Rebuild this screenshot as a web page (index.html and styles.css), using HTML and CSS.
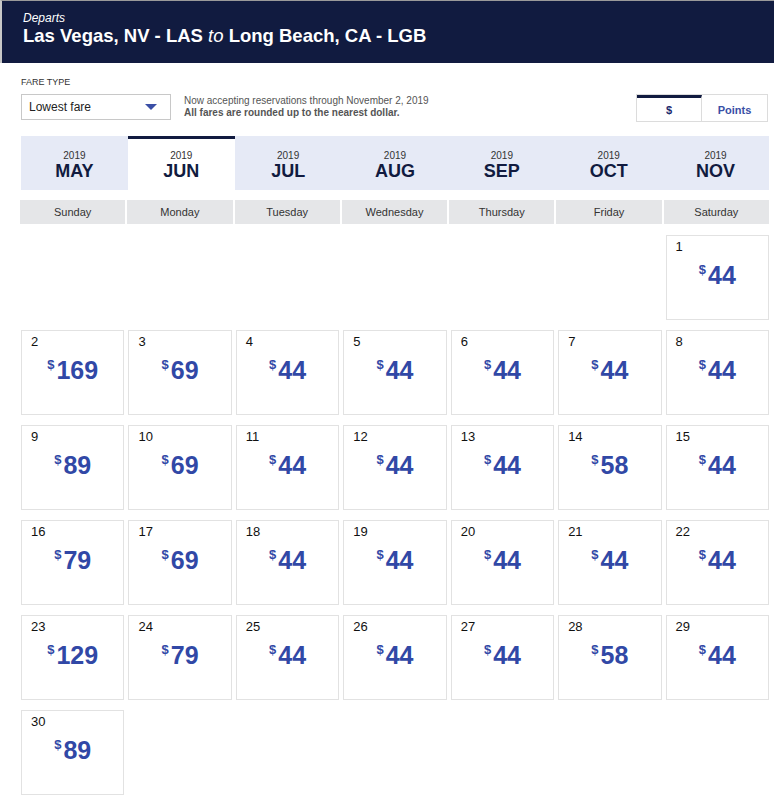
FILE: index.html
```html
<!DOCTYPE html>
<html>
<head>
    <title>Low Fare Calendar</title>
    <link rel="stylesheet" href="styles.css">
</head>
<body>
    <div class="header">
        <div class="departs">Departs</div>
        <h1 class="route">Las Vegas, NV - LAS <em>to</em> Long Beach, CA - LGB</h1>
    </div>

    <div class="page">
        <div class="fare-row">
            <div class="fare-type">
                <label class="fare-label">FARE TYPE</label>
                <div class="select">
                    <span>Lowest fare</span>
                    <svg width="12" height="6" viewBox="0 0 12 6"><path d="M0 0h12L6 6z" fill="#3a4fa6"/></svg>
                </div>
            </div>
            <div class="notice">
                <p>Now accepting reservations through November 2, 2019</p>
                <p class="strong">All fares are rounded up to the nearest dollar.</p>
            </div>
            <div class="toggle">
                <div class="toggle-btn active">$</div>
                <div class="toggle-btn">Points</div>
            </div>
        </div>

        <div class="months">
            <div class="month"><span class="year">2019</span><span class="name">MAY</span></div>
            <div class="month active"><span class="year">2019</span><span class="name">JUN</span></div>
            <div class="month"><span class="year">2019</span><span class="name">JUL</span></div>
            <div class="month"><span class="year">2019</span><span class="name">AUG</span></div>
            <div class="month"><span class="year">2019</span><span class="name">SEP</span></div>
            <div class="month"><span class="year">2019</span><span class="name">OCT</span></div>
            <div class="month"><span class="year">2019</span><span class="name">NOV</span></div>
        </div>

        <div class="weekdays">
            <div>Sunday</div>
            <div>Monday</div>
            <div>Tuesday</div>
            <div>Wednesday</div>
            <div>Thursday</div>
            <div>Friday</div>
            <div>Saturday</div>
        </div>

        <div class="calendar">
            <div class="day first"><div class="num">1</div><div class="price"><sup>$</sup>44</div></div>
            <div class="day"><div class="num">2</div><div class="price"><sup>$</sup>169</div></div>
            <div class="day"><div class="num">3</div><div class="price"><sup>$</sup>69</div></div>
            <div class="day"><div class="num">4</div><div class="price"><sup>$</sup>44</div></div>
            <div class="day"><div class="num">5</div><div class="price"><sup>$</sup>44</div></div>
            <div class="day"><div class="num">6</div><div class="price"><sup>$</sup>44</div></div>
            <div class="day"><div class="num">7</div><div class="price"><sup>$</sup>44</div></div>
            <div class="day"><div class="num">8</div><div class="price"><sup>$</sup>44</div></div>
            <div class="day"><div class="num">9</div><div class="price"><sup>$</sup>89</div></div>
            <div class="day"><div class="num">10</div><div class="price"><sup>$</sup>69</div></div>
            <div class="day"><div class="num">11</div><div class="price"><sup>$</sup>44</div></div>
            <div class="day"><div class="num">12</div><div class="price"><sup>$</sup>44</div></div>
            <div class="day"><div class="num">13</div><div class="price"><sup>$</sup>44</div></div>
            <div class="day"><div class="num">14</div><div class="price"><sup>$</sup>58</div></div>
            <div class="day"><div class="num">15</div><div class="price"><sup>$</sup>44</div></div>
            <div class="day"><div class="num">16</div><div class="price"><sup>$</sup>79</div></div>
            <div class="day"><div class="num">17</div><div class="price"><sup>$</sup>69</div></div>
            <div class="day"><div class="num">18</div><div class="price"><sup>$</sup>44</div></div>
            <div class="day"><div class="num">19</div><div class="price"><sup>$</sup>44</div></div>
            <div class="day"><div class="num">20</div><div class="price"><sup>$</sup>44</div></div>
            <div class="day"><div class="num">21</div><div class="price"><sup>$</sup>44</div></div>
            <div class="day"><div class="num">22</div><div class="price"><sup>$</sup>44</div></div>
            <div class="day"><div class="num">23</div><div class="price"><sup>$</sup>129</div></div>
            <div class="day"><div class="num">24</div><div class="price"><sup>$</sup>79</div></div>
            <div class="day"><div class="num">25</div><div class="price"><sup>$</sup>44</div></div>
            <div class="day"><div class="num">26</div><div class="price"><sup>$</sup>44</div></div>
            <div class="day"><div class="num">27</div><div class="price"><sup>$</sup>44</div></div>
            <div class="day"><div class="num">28</div><div class="price"><sup>$</sup>58</div></div>
            <div class="day"><div class="num">29</div><div class="price"><sup>$</sup>44</div></div>
            <div class="day"><div class="num">30</div><div class="price"><sup>$</sup>89</div></div>
        </div>
    </div>
</body>
</html>
```

FILE: styles.css
```css
body {
    font-family: "Liberation Sans", Arial, sans-serif;
    background-color: #fff;
    margin: 0;
    color: #111;
}

.header {
    background-color: #111b40;
    color: #fff;
    height: 63px;
    box-sizing: border-box;
    border-top: 1px solid #9a9a9a;
    border-left: 2px solid #c8c8c8;
    padding: 10px 0 0 21px;
}

.departs {
    font-size: 12px;
    font-style: italic;
    line-height: 14px;
}

.route {
    margin: 0;
    font-size: 18.5px;
    line-height: 22px;
    font-weight: bold;
}

.route em {
    font-weight: normal;
}

.page {
    margin-left: 21px;
    width: 748px;
}

.fare-row {
    display: flex;
    align-items: flex-end;
    margin-top: 13px;
}

.fare-label {
    display: block;
    font-size: 9px;
    line-height: 12px;
    color: #333;
    margin-bottom: 6px;
}

.select {
    width: 150px;
    height: 26px;
    box-sizing: border-box;
    border: 1px solid #c8c8c8;
    display: flex;
    align-items: center;
    justify-content: space-between;
    padding: 0 13px 0 7px;
    font-size: 12px;
    color: #222;
}

.notice {
    margin-left: 13px;
    margin-bottom: 1px;
    font-size: 10px;
    line-height: 12px;
    color: #555;
}

.notice p {
    margin: 0;
}

.notice .strong {
    font-weight: bold;
}

.toggle {
    margin-left: auto;
    margin-right: 1px;
    display: flex;
    border: 1px solid #dcdcdc;
    margin-bottom: -2px;
}

.toggle-btn {
    width: 65px;
    height: 26px;
    line-height: 24px;
    box-sizing: border-box;
    text-align: center;
    font-size: 11px;
    font-weight: bold;
    color: #3a4fa6;
    border-top: 3px solid transparent;
}

.toggle-btn.active {
    border-top-color: #111b40;
    border-right: 1px solid #dcdcdc;
    color: #1c2a6e;
}

.months {
    display: grid;
    grid-template-columns: repeat(7, 1fr);
    margin-top: 16px;
    background-color: #e6eaf6;
}

.month {
    height: 54px;
    box-sizing: border-box;
    padding-top: 11px;
    text-align: center;
    border-top: 3px solid transparent;
}

.month.active {
    background-color: #fff;
    border-top-color: #111b40;
}

.year {
    display: block;
    font-size: 10px;
    line-height: 11px;
    color: #333;
}

.name {
    display: block;
    font-size: 18px;
    line-height: 20px;
    font-weight: bold;
    color: #111b40;
}

.weekdays {
    display: grid;
    grid-template-columns: repeat(7, 1fr);
    gap: 2px;
    margin: 10px 0 0 -1px;
}

.weekdays div {
    background-color: #e5e6e8;
    height: 24px;
    line-height: 24px;
    text-align: center;
    font-size: 11px;
    color: #333;
}

.calendar {
    display: grid;
    grid-template-columns: repeat(7, 1fr);
    column-gap: 4px;
    row-gap: 10px;
    margin-top: 11px;
}

.day {
    height: 85px;
    box-sizing: border-box;
    border: 1px solid #e2e2e2;
    padding: 3px 9px;
}

.day.first {
    grid-column-start: 7;
}

.num {
    font-size: 13px;
    line-height: 15px;
    color: #111;
}

.price {
    margin-top: 6px;
    text-align: center;
    font-size: 25px;
    line-height: 30px;
    font-weight: bold;
    color: #3148a6;
}

.price sup {
    font-size: 13px;
    vertical-align: top;
    line-height: 20px;
    margin-right: 2px;
}
```
